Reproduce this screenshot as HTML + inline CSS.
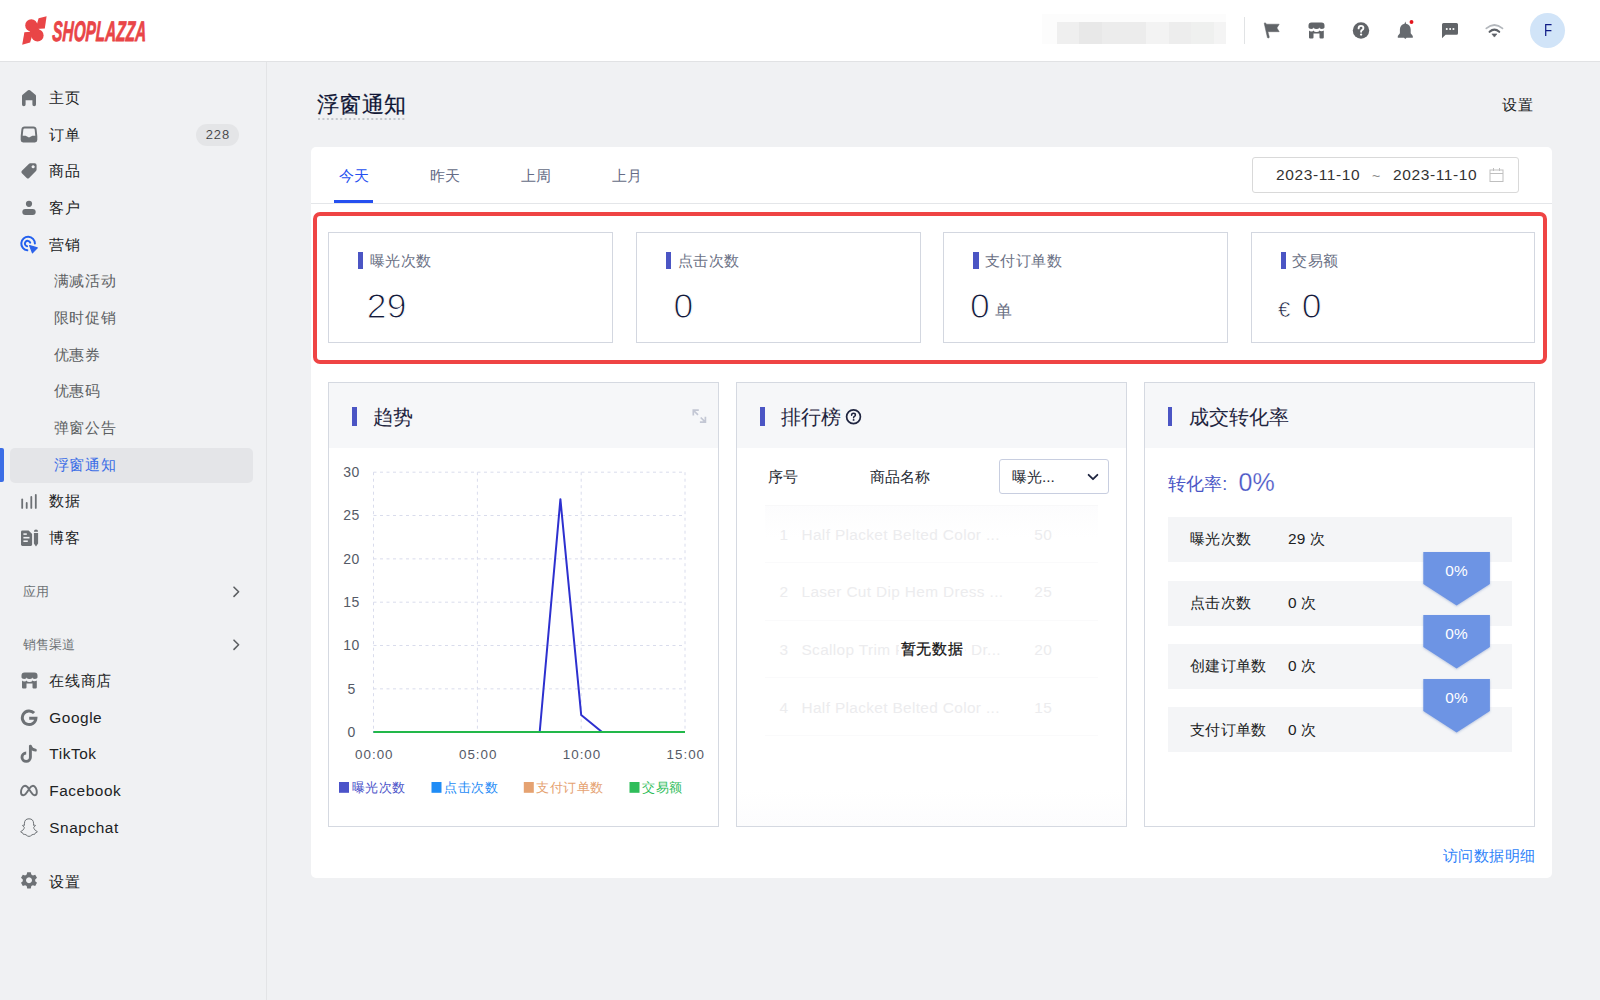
<!DOCTYPE html>
<html><head><meta charset="utf-8">
<style>
*{box-sizing:border-box;margin:0;padding:0}
html,body{width:1600px;height:1000px;overflow:hidden}
body{font-family:"Liberation Sans",sans-serif;background:#f0f1f3;color:#202223;position:relative}
.abs{position:absolute}
#hdr{left:0;top:0;width:1600px;height:62px;background:#fff;border-bottom:1px solid #e1e2e4}
#side{left:0;top:62px;width:267px;height:938px;background:#f0f1f3;border-right:1px solid #e3e4e6}
.nav{position:absolute;left:0;width:266px;height:20px;line-height:20px;font-size:15.4px;color:#202223;letter-spacing:0.7px}
.nav .t{position:absolute;left:49.3px;top:0;white-space:nowrap}
.nav.sub .t{left:53.5px;color:#5c5f62}
.nav .ic{position:absolute;left:20px;top:2px;width:17px;height:17px}
.sec{position:absolute;left:23px;font-size:13px;color:#6d7175;line-height:16px}
.chev{position:absolute;left:231px;width:8px;height:12px}
.tab{top:165.5px;font-size:15.4px;line-height:20px;color:#656c86;letter-spacing:0.2px}
.date{top:165.4px;font-size:15.5px;line-height:20px;color:#333;letter-spacing:0.6px}
.sbox{top:232.2px;width:284.5px;height:110.5px;border:1px solid #d3d7e0;background:#fff}
.sbox .bar{position:absolute;left:29px;top:18.8px;width:5.2px;height:17.4px;background:#4b55c4}
.sbox .lbl{position:absolute;left:40.5px;top:18px;font-size:15.4px;line-height:20px;color:#6b7185;white-space:nowrap;letter-spacing:0.5px}
.sbox .val{position:absolute;left:27.5px;top:52.4px;height:40px;white-space:nowrap;color:#141a3a}
.sbox .num{font-size:35.5px;line-height:40px;letter-spacing:0.2px;-webkit-text-stroke:1.1px #fff}
.sbox .unit{font-size:16.6px;color:#6b7185;margin-left:5px;position:relative;top:-1px}
.sbox .eur{font-size:22px;color:#141a3a;margin-right:10px;position:relative;left:-1.5px;top:-1px;-webkit-text-stroke:0.6px #fff}
.panel{top:382.3px;width:391px;height:444.5px;border:1px solid #d5d9e1;background:#fff}
.panel .ph{position:absolute;left:0;top:0;right:0;height:65px;background:#f6f7f9}
.panel .pbar{position:absolute;left:22.5px;top:23.6px;width:4.8px;height:19.5px;background:#4b55c4}
.panel .pt{position:absolute;left:44px;top:22px;font-size:20px;line-height:24px;color:#1f2540;white-space:nowrap}
.frow{left:737px;width:389px;height:20px;font-size:15.4px;line-height:20px;color:#ececee;white-space:nowrap;letter-spacing:0.35px}
</style></head>
<body>
<div id="hdr" class="abs">
<svg class="abs" style="left:18px;top:12px" width="34" height="36" viewBox="0 0 34 36"><g fill="#e94547">
<circle cx="13.3" cy="13.4" r="6.1"/><circle cx="19.5" cy="23.4" r="6.1"/><line x1="13.8" y1="14.4" x2="19" y2="22.4" stroke="#e94547" stroke-width="9"/>
<polygon points="20.6,6.3 28.6,4.2 26.8,16.6 17.5,16.9"/>
<polygon points="6.4,20.2 15.5,19.6 12.1,30.4 4.2,32.7"/></g></svg>
<div id="logotxt" class="abs" style="left:52px;top:13.8px;font-size:28.2px;font-weight:bold;font-style:italic;color:#e94547;transform-origin:0 27px;transform:scaleX(0.535) skewX(-5deg);line-height:34px;letter-spacing:0.4px;-webkit-text-stroke:0.9px #e94547">SHOPLAZZA</div>
<div class="abs" style="left:1042px;top:14px;width:184px;height:30px;background:#fcfcfc"></div>
<div class="abs" style="left:1057px;top:22px;width:22px;height:22px;background:#efefef"></div>
<div class="abs" style="left:1079px;top:22px;width:23px;height:22px;background:#e8e8e8"></div>
<div class="abs" style="left:1102px;top:22px;width:44px;height:22px;background:#ececec"></div>
<div class="abs" style="left:1146px;top:22px;width:23px;height:22px;background:#f3f3f3"></div>
<div class="abs" style="left:1169px;top:22px;width:22px;height:22px;background:#ededed"></div>
<div class="abs" style="left:1191px;top:22px;width:23px;height:22px;background:#eff0ef"></div>
<div class="abs" style="left:1214px;top:22px;width:12px;height:22px;background:#f4f4f4"></div>
<div class="abs" style="left:1244px;top:17px;width:1px;height:27px;background:#e1e3e5"></div>
<!-- flag -->
<svg class="abs" style="left:1262px;top:21px" width="20" height="20" viewBox="0 0 20 20"><path fill="#616468" stroke="#616468" stroke-width="0.5" stroke-linejoin="round" d="M2.2 2.3 Q2.6 1.6 3.5 1.9 L4.5 3.2 H17.2 L14.9 6.9 L17.2 10.7 H5.9 L7.3 16.1 Q7.3 17 6.3 17 Q5.6 17 5.4 16.5 Z"/></svg>
<!-- store -->
<svg class="abs" style="left:1306px;top:21px" width="20" height="20" viewBox="0 0 20 20"><path fill="#616468" d="M18.5 6.6 A2.67 1.5 0 0 1 13.17 6.6 A2.67 1.5 0 0 1 7.83 6.6 A2.67 1.5 0 0 1 2.5 6.6 V4.5 Q2.5 1.5 5.5 1.5 H15.5 Q18.5 1.5 18.5 4.5 Z M3 9.6 A2.67 1.5 0 0 0 7.83 9.6 A2.67 1.5 0 0 0 13.17 9.6 A2.67 1.5 0 0 0 17.8 9.6 V16.4 Q17.8 17.5 16.7 17.5 H14.6 Q13.5 17.5 13.5 16.4 V12.6 H7.5 V16.4 Q7.5 17.5 6.4 17.5 H4.1 Q3 17.5 3 16.4 Z"/></svg>
<!-- help -->
<svg class="abs" style="left:1351px;top:21px" width="20" height="20" viewBox="0 0 20 20"><circle cx="10" cy="9.5" r="8.2" fill="#616468"/><path d="M7.6 7.4 Q7.6 4.9 10 4.9 Q12.4 4.9 12.4 7.1 Q12.4 8.4 11 9.1 Q10.1 9.6 10.1 10.8" stroke="#fff" stroke-width="1.9" fill="none" stroke-linecap="round"/><circle cx="10.1" cy="13.6" r="1.15" fill="#fff"/></svg>
<!-- bell -->
<svg class="abs" style="left:1395px;top:19px" width="22" height="22" viewBox="0 0 22 22"><path fill="#666a6f" d="M10.3 2.4 L11.1 4.7 Q15.6 5.9 15.7 10.5 V14.2 L17.8 17 V18.7 H11.6 L10.3 20 L9 18.7 H2.8 V17 L4.9 14.2 V10.5 Q5 5.9 9.5 4.7 Z"/><circle cx="16.5" cy="3" r="1.95" fill="#e3141c"/></svg>
<!-- chat -->
<svg class="abs" style="left:1440px;top:20px" width="20" height="20" viewBox="0 0 20 20"><path fill="#616468" d="M3.5 3 H16.5 Q18 3 18 4.5 V13.3 Q18 14.8 16.5 14.8 H5.6 L2 18.2 V4.5 Q2 3 3.5 3 Z"/><rect x="5.9" y="8.1" width="1.7" height="1.8" fill="#fff"/><rect x="9.3" y="8.1" width="1.7" height="1.8" fill="#fff"/><rect x="12.6" y="8.1" width="1.7" height="1.8" fill="#fff"/></svg>
<!-- wifi -->
<svg class="abs" style="left:1484px;top:20px" width="21" height="20" viewBox="0 0 21 20"><path d="M2.3 8.4 Q10.4 1.6 18.5 8.4" stroke="#b3b7bc" stroke-width="1.7" fill="none" stroke-linecap="round"/><path d="M5.6 11.8 Q10.4 7.6 15.2 11.8" stroke="#5c6066" stroke-width="2.1" fill="none" stroke-linecap="round"/><path d="M7.9 13.9 H12.9 L10.4 17.1 Z" fill="#5c6066" stroke="#5c6066" stroke-width="0.6" stroke-linejoin="round"/></svg>
<div class="abs" style="left:1530.2px;top:12.6px;width:35.2px;height:35.2px;border-radius:50%;background:#d1e4f8"></div><div class="abs" style="left:1544.2px;top:21.3px;font-size:17px;line-height:20px;color:#0e1a85;transform:scaleX(0.78);transform-origin:0 0">F</div>
</div>
<div id="side" class="abs"></div>
<div class="abs" style="left:9.5px;top:447.6px;width:243px;height:35px;background:#e4e5e8;border-radius:5px"></div>
<div class="abs" style="left:0;top:448px;width:3.5px;height:34px;background:#3c6ee6;border-radius:0 2px 2px 0"></div>
<div class="nav" style="top:88.0px"><span class="t">主页</span></div>
<div class="nav" style="top:124.7px"><span class="t">订单</span></div>
<div class="nav" style="top:161.3px"><span class="t">商品</span></div>
<div class="nav" style="top:198.0px"><span class="t">客户</span></div>
<div class="nav" style="top:234.6px"><span class="t">营销</span></div>
<div class="nav sub" style="top:271.3px"><span class="t">满减活动</span></div>
<div class="nav sub" style="top:308.0px"><span class="t">限时促销</span></div>
<div class="nav sub" style="top:344.6px"><span class="t">优惠券</span></div>
<div class="nav sub" style="top:381.3px"><span class="t">优惠码</span></div>
<div class="nav sub" style="top:418.0px"><span class="t">弹窗公告</span></div>
<div class="nav sub" style="top:454.6px"><span class="t" style="color:#3c6ee6">浮窗通知</span></div>
<div class="nav" style="top:491.3px"><span class="t">数据</span></div>
<div class="nav" style="top:528.0px"><span class="t">博客</span></div>
<div class="abs" style="left:196px;top:123.5px;width:43px;height:22px;border-radius:11px;background:#e4e5e7;font-size:13px;line-height:22px;text-align:center;color:#202223;letter-spacing:1px;padding-left:1px;-webkit-text-stroke:0.2px #e4e5e7">228</div>
<div class="sec" style="top:584px">应用</div>
<div class="sec" style="top:637px">销售渠道</div>
<svg class="abs" style="left:232px;top:585.5px" width="9" height="12" viewBox="0 0 9 12"><path d="M2 1.2 L6.6 5.8 L2 10.4" stroke="#5c5f62" stroke-width="1.6" fill="none" stroke-linecap="round" stroke-linejoin="round"/></svg>
<svg class="abs" style="left:232px;top:639px" width="9" height="12" viewBox="0 0 9 12"><path d="M2 1.2 L6.6 5.8 L2 10.4" stroke="#5c5f62" stroke-width="1.6" fill="none" stroke-linecap="round" stroke-linejoin="round"/></svg>
<div class="nav" style="top:671.0px"><span class="t">在线商店</span></div>
<div class="nav" style="top:707.6px"><span class="t" style="letter-spacing:0.55px">Google</span></div>
<div class="nav" style="top:744.3px"><span class="t" style="letter-spacing:0.55px">TikTok</span></div>
<div class="nav" style="top:781.0px"><span class="t" style="letter-spacing:0.55px">Facebook</span></div>
<div class="nav" style="top:817.6px"><span class="t" style="letter-spacing:0.55px">Snapchat</span></div>
<div class="nav" style="top:871.7px"><span class="t">设置</span></div>

<svg class="abs" style="left:20px;top:88px" width="18" height="20" viewBox="0 0 18 20"><path fill="#6d7175" d="M9 1.9 Q9.5 1.9 10 2.3 L15.4 6.8 Q16 7.3 16 8.1 V16.4 Q16 18.2 14.2 18.2 Q12.4 18.2 12.4 16.4 V12.2 H5.6 V16.4 Q5.6 18.2 3.8 18.2 Q2 18.2 2 16.4 V8.1 Q2 7.3 2.6 6.8 L8 2.3 Q8.5 1.9 9 1.9 Z"/></svg>
<svg class="abs" style="left:20px;top:125px" width="18" height="19" viewBox="0 0 18 19"><path fill="#6d7175" fill-rule="evenodd" d="M4.5 1.6 H13.5 Q16.2 1.6 16.6 4.4 L17.3 11 V15 Q17.3 17.4 14.9 17.4 H3.1 Q0.7 17.4 0.7 15 V11 L1.4 4.4 Q1.8 1.6 4.5 1.6 Z M4.6 3.5 Q3.4 3.5 3.3 4.7 L2.7 10.8 H5.6 L9 12.6 L12.4 10.8 H15.3 L14.7 4.7 Q14.6 3.5 13.4 3.5 Z"/></svg>
<svg class="abs" style="left:20px;top:162px" width="18" height="18" viewBox="0 0 18 18"><path fill="#6d7175" fill-rule="evenodd" d="M10.2 1.2 H14.6 Q16.6 1.2 16.6 3.2 V7.6 Q16.6 8.5 16 9.1 L9.1 16 Q7.9 17.2 6.7 16 L1.9 11.2 Q0.7 10 1.9 8.8 L8.8 1.9 Q9.4 1.2 10.2 1.2 Z M13.1 3.4 A1.45 1.45 0 1 0 13.11 3.4 Z"/><circle cx="13.1" cy="4.85" r="1.4" fill="#f0f1f3"/></svg>
<svg class="abs" style="left:20px;top:198px" width="18" height="20" viewBox="0 0 18 20"><circle cx="9" cy="5.8" r="3.1" fill="#6d7175"/><rect x="2.3" y="11" width="13.4" height="6" rx="3" fill="#6d7175"/></svg>
<svg class="abs" style="left:19px;top:235px" width="20" height="20" viewBox="0 0 20 20"><path d="M15.9 8.6 A6.8 6.8 0 1 0 8.3 15.3" stroke="#2360ee" stroke-width="2" fill="none" stroke-linecap="round"/><path d="M11.2 7.6 A2.75 2.75 0 1 0 8.1 11.3" stroke="#2360ee" stroke-width="2" fill="none" stroke-linecap="round"/><path d="M10.6 10.6 L18.3 12.9 L13.4 17.8 Z" fill="#2b62ea" stroke="#2b62ea" stroke-width="1.1" stroke-linejoin="round"/></svg>
<svg class="abs" style="left:20px;top:492px" width="18" height="18" viewBox="0 0 18 18"><g stroke="#6d7175" stroke-width="1.8" stroke-linecap="round"><line x1="2.2" y1="7.5" x2="2.2" y2="15.9"/><line x1="6.7" y1="10.9" x2="6.7" y2="15.9"/><line x1="11.3" y1="5" x2="11.3" y2="15.9"/><line x1="15.8" y1="2.9" x2="15.8" y2="15.9"/></g></svg>
<svg class="abs" style="left:20px;top:528px" width="20" height="20" viewBox="0 0 20 20"><path fill="#6d7175" d="M2.4 2.5 H8.6 L12.1 6 V16.6 Q12.1 17.9 10.8 17.9 H2.4 Q1 17.9 1 16.6 V3.9 Q1 2.5 2.4 2.5 Z"/><g fill="#f0f1f3"><rect x="3.4" y="5.3" width="3.4" height="1.6"/><rect x="3.4" y="8.9" width="6.1" height="1.6"/><rect x="3.4" y="12.4" width="4.4" height="1.6"/></g><path fill="#6d7175" d="M13.9 3.8 Q13.9 1.4 16 1.4 Q18.1 1.4 18.1 3.8 Z M13.9 5 H18.1 V15.6 L16 18.6 L13.9 15.6 Z"/></svg>
<svg class="abs" style="left:19px;top:670.5px" width="20" height="20" viewBox="0 0 20 20"><path fill="#6d7175" d="M18.5 6.6 A2.67 1.5 0 0 1 13.17 6.6 A2.67 1.5 0 0 1 7.83 6.6 A2.67 1.5 0 0 1 2.5 6.6 V4.5 Q2.5 1.5 5.5 1.5 H15.5 Q18.5 1.5 18.5 4.5 Z M3 9.6 A2.67 1.5 0 0 0 7.83 9.6 A2.67 1.5 0 0 0 13.17 9.6 A2.67 1.5 0 0 0 17.8 9.6 V16.4 Q17.8 17.5 16.7 17.5 H14.6 Q13.5 17.5 13.5 16.4 V12.6 H7.5 V16.4 Q7.5 17.5 6.4 17.5 H4.1 Q3 17.5 3 16.4 Z"/></svg>
<svg class="abs" style="left:20px;top:708.8px" width="18" height="19" viewBox="0 0 18 19"><path d="M14.1 4.1 A6.8 6.8 0 1 0 15.9 9.3 H9.2" stroke="#6d7175" stroke-width="3" fill="none"/></svg>
<svg class="abs" style="left:20px;top:744px" width="18" height="20" viewBox="0 0 18 20"><path d="M10.4 1.8 V13.2 A4.2 4.2 0 1 1 6.2 9" stroke="#6d7175" stroke-width="2.9" fill="none"/><path d="M10.4 2.2 Q11.2 5.5 15.4 6.2" stroke="#6d7175" stroke-width="2.8" fill="none" stroke-linecap="round"/></svg>
<svg class="abs" style="left:19px;top:782px" width="20" height="16" viewBox="0 0 20 16"><path d="M10 7 C8.5 4.6 7.3 3.8 6 3.8 C3.6 3.8 2 7.2 2 10.2 C2 12.3 3 13.3 4.3 13.3 C6.3 13.3 7.8 11 10 7 C12 3.9 13 3.8 14 3.8 C16.3 3.8 17.8 7.5 17.8 10.2 C17.8 12.3 16.8 13.3 15.6 13.3 C14 13.3 12.6 11.5 10 7 Z" stroke="#6d7175" stroke-width="1.9" fill="none" stroke-linejoin="round"/></svg>
<svg class="abs" style="left:19px;top:817px" width="20" height="21" viewBox="0 0 20 21"><path d="M10 1.8 Q14.6 1.8 14.6 6.8 V8.4 Q15.6 8 16.4 8.4 Q16.6 9 15.2 9.7 Q14.4 10 14.9 11.4 Q16 13.8 18.3 14.6 Q18.3 15.5 16.3 15.9 Q15.9 17 15.5 17.4 Q14.2 17.2 13 17.8 Q11.4 19.4 10 19.4 Q8.6 19.4 7 17.8 Q5.8 17.2 4.5 17.4 Q4.1 17 3.7 15.9 Q1.7 15.5 1.7 14.6 Q4 13.8 5.1 11.4 Q5.6 10 4.8 9.7 Q3.4 9 3.6 8.4 Q4.4 8 5.4 8.4 V6.8 Q5.4 1.8 10 1.8 Z" stroke="#6d7175" stroke-width="1" fill="none" stroke-linejoin="round"/></svg>
<svg class="abs" style="left:19px;top:871px" width="20" height="20" viewBox="0 0 20 20"><path fill="#6d7175" fill-rule="evenodd" d="M8.2 1.2 H11.8 L12.3 3.5 L13.9 4.4 L16.2 3.7 L18 6.8 L16.2 8.4 V10.2 L18 11.8 L16.2 15 L13.9 14.2 L12.3 15.1 L11.8 17.5 H8.2 L7.7 15.1 L6.1 14.2 L3.8 15 L2 11.8 L3.8 10.2 V8.4 L2 6.8 L3.8 3.7 L6.1 4.4 L7.7 3.5 Z M10 6.3 A3 3 0 1 0 10.01 6.3 Z"/></svg>

<!-- MAIN -->
<div class="abs" style="left:317px;top:92px;font-size:22px;line-height:26px;color:#0f1535;letter-spacing:0.3px;-webkit-text-stroke:0.2px #0f1535">浮窗通知</div>
<svg class="abs" style="left:318px;top:118px" width="88" height="2" viewBox="0 0 88 2"><g fill="#c4c8cd"><rect x="0.00" y="0" width="2" height="2"/><rect x="4.44" y="0" width="2" height="2"/><rect x="8.88" y="0" width="2" height="2"/><rect x="13.32" y="0" width="2" height="2"/><rect x="17.76" y="0" width="2" height="2"/><rect x="22.20" y="0" width="2" height="2"/><rect x="26.64" y="0" width="2" height="2"/><rect x="31.08" y="0" width="2" height="2"/><rect x="35.52" y="0" width="2" height="2"/><rect x="39.96" y="0" width="2" height="2"/><rect x="44.40" y="0" width="2" height="2"/><rect x="48.84" y="0" width="2" height="2"/><rect x="53.28" y="0" width="2" height="2"/><rect x="57.72" y="0" width="2" height="2"/><rect x="62.16" y="0" width="2" height="2"/><rect x="66.60" y="0" width="2" height="2"/><rect x="71.04" y="0" width="2" height="2"/><rect x="75.48" y="0" width="2" height="2"/><rect x="79.92" y="0" width="2" height="2"/><rect x="84.36" y="0" width="2" height="2"/></g></svg>
<div class="abs" style="left:1502.3px;top:94.6px;font-size:15.4px;line-height:20px;color:#202223;letter-spacing:1px">设置</div>
<div id="card" class="abs" style="left:311px;top:147px;width:1241px;height:731px;background:#fff;border-radius:5px"></div>
<div class="abs" style="left:311px;top:203px;width:1241px;height:1px;background:#e4e6e9"></div>
<div class="abs tab" style="left:338.5px;color:#2550f0">今天</div>
<div class="abs tab" style="left:430px">昨天</div>
<div class="abs tab" style="left:521px">上周</div>
<div class="abs tab" style="left:612px">上月</div>
<div class="abs" style="left:333.8px;top:200px;width:39.5px;height:3px;background:#2550f0"></div>
<div class="abs" style="left:1252px;top:157px;width:267px;height:36px;border:1px solid #d9d9d9;border-radius:3px"></div>
<div class="abs date" style="left:1276px">2023-11-10</div>
<div class="abs" style="left:1372px;top:166px;font-size:14px;line-height:20px;color:#8a8a8a">~</div>
<div class="abs date" style="left:1393px">2023-11-10</div>
<svg class="abs" style="left:1489px;top:167px" width="15" height="16" viewBox="0 0 15 16"><g fill="none" stroke="#bfbfbf" stroke-width="1"><rect x="1" y="3" width="13" height="11.5"/><line x1="1" y1="6.5" x2="14" y2="6.5"/><line x1="4.5" y1="1" x2="4.5" y2="4"/><line x1="10.5" y1="1" x2="10.5" y2="4"/></g></svg>
<div class="abs" style="left:312.8px;top:212.2px;width:1234.7px;height:152.3px;border:4.2px solid #ef4444;border-radius:7px"></div>
<div class="abs sbox" style="left:328.3px"><div class="bar"></div><div class="lbl">曝光次数</div><div class="val"><span class="num" style="margin-left:10px">29</span></div></div>
<div class="abs sbox" style="left:636px"><div class="bar"></div><div class="lbl">点击次数</div><div class="val"><span class="num" style="margin-left:9px">0</span></div></div>
<div class="abs sbox" style="left:943.4px"><div class="bar"></div><div class="lbl">支付订单数</div><div class="val"><span class="num" style="margin-left:-2px">0</span><span class="unit">单</span></div></div>
<div class="abs sbox" style="left:1250.9px"><div class="bar"></div><div class="lbl">交易额</div><div class="val"><span class="eur">€</span><span class="num">0</span></div></div>
<div class="abs panel" style="left:328.3px"><div class="ph"></div><div class="pbar"></div><div class="pt">趋势</div></div>
<div class="abs panel" style="left:736.3px"><div class="ph"></div><div class="pbar"></div><div class="pt">排行榜</div></div>
<div class="abs panel" style="left:1144.3px"><div class="ph"></div><div class="pbar" style="width:4.2px"></div><div class="pt">成交转化率</div></div>
<svg class="abs" style="left:0;top:0" width="1600" height="1000" viewBox="0 0 1600 1000">
<g stroke="#c3c7d4" stroke-width="1.7" fill="none" stroke-linecap="butt"><path d="M693.3 415.6 V410.2 H698.8 M693.6 410.5 L698 414.9"/><path d="M705.4 416.8 V422.2 H699.9 M705.1 421.9 L700.7 417.5"/></g>
<path d="M373.5 472.20 H685 M373.5 515.53 H685 M373.5 558.86 H685 M373.5 602.19 H685 M373.5 645.52 H685 M373.5 688.85 H685 M373.5 472.2 V732.2 M477.4 472.2 V732.2 M581.2 472.2 V732.2 M685 472.2 V732.2" stroke="#d9dcec" stroke-width="1" stroke-dasharray="3 3.5" fill="none"/>
<polyline points="373.5,732 539.7,732 560.4,499.2 581.2,715 602,732 685,732" stroke="#2d30cf" stroke-width="2" fill="none" stroke-linejoin="round"/>
<line x1="373.5" y1="732" x2="685" y2="732" stroke="#22b84a" stroke-width="2"/>
<text x="351.5" y="477.0" text-anchor="middle" font-size="14" fill="#555a66" letter-spacing="0.4">30</text>
<text x="351.5" y="520.3" text-anchor="middle" font-size="14" fill="#555a66" letter-spacing="0.4">25</text>
<text x="351.5" y="563.7" text-anchor="middle" font-size="14" fill="#555a66" letter-spacing="0.4">20</text>
<text x="351.5" y="607.0" text-anchor="middle" font-size="14" fill="#555a66" letter-spacing="0.4">15</text>
<text x="351.5" y="650.3" text-anchor="middle" font-size="14" fill="#555a66" letter-spacing="0.4">10</text>
<text x="351.5" y="693.6" text-anchor="middle" font-size="14" fill="#555a66" letter-spacing="0.4">5</text>
<text x="351.5" y="737.0" text-anchor="middle" font-size="14" fill="#555a66" letter-spacing="0.4">0</text>
<text x="373.8" dx="0.5" y="758.8" text-anchor="middle" font-size="13.4" fill="#555a66" letter-spacing="1">00:00</text>
<text x="477.7" dx="0.5" y="758.8" text-anchor="middle" font-size="13.4" fill="#555a66" letter-spacing="1">05:00</text>
<text x="581.5" dx="0.5" y="758.8" text-anchor="middle" font-size="13.4" fill="#555a66" letter-spacing="1">10:00</text>
<text x="685.3" dx="0.5" y="758.8" text-anchor="middle" font-size="13.4" fill="#555a66" letter-spacing="1">15:00</text>
<rect x="339" y="782" width="10" height="10.8" fill="#4b53c9"/><text x="351.5" y="792" font-size="13.2" letter-spacing="0.5" fill="#4b53c9">曝光次数</text>
<rect x="431.5" y="782" width="10" height="10.8" fill="#1f8cf6"/><text x="444.0" y="792" font-size="13.2" letter-spacing="0.5" fill="#1f8cf6">点击次数</text>
<rect x="523.8" y="782" width="10" height="10.8" fill="#e5a271"/><text x="536.3" y="792" font-size="13.2" letter-spacing="0.5" fill="#e5a271">支付订单数</text>
<rect x="629.5" y="782" width="10" height="10.8" fill="#2fbd5a"/><text x="642.0" y="792" font-size="13.2" letter-spacing="0.5" fill="#2fbd5a">交易额</text>
</svg>
<svg class="abs" style="left:845px;top:407.5px" width="17" height="17" viewBox="0 0 17 17"><circle cx="8.5" cy="8.7" r="6.9" stroke="#1f2540" stroke-width="1.7" fill="none"/><path d="M6.6 7.2 Q6.6 5.3 8.5 5.3 Q10.4 5.3 10.4 6.9 Q10.4 7.9 9.4 8.4 Q8.6 8.8 8.6 9.8" stroke="#1f2540" stroke-width="1.5" fill="none" stroke-linecap="round"/><circle cx="8.6" cy="11.9" r="0.95" fill="#1f2540"/></svg>
<div class="abs" style="left:768px;top:467px;font-size:15.4px;line-height:20px;color:#262a33">序号</div>
<div class="abs" style="left:869.5px;top:467px;font-size:15.4px;line-height:20px;color:#262a33">商品名称</div>
<div class="abs" style="left:998.5px;top:459.2px;width:110.7px;height:34.8px;border:1px solid #c8cee0;border-radius:3px;background:#fff"></div>
<div class="abs" style="left:1012px;top:467px;font-size:15.4px;line-height:20px;color:#262a33">曝光...</div>
<svg class="abs" style="left:1086px;top:472px" width="14" height="10" viewBox="0 0 14 10"><path d="M2.6 2.8 L7 7.2 L11.4 2.8" stroke="#1f2540" stroke-width="1.8" fill="none" stroke-linecap="round" stroke-linejoin="round"/></svg>
<div class="abs" style="left:765px;top:505px;width:333px;height:32px;background:linear-gradient(#fcfcfd,#fff)"></div><div class="abs" style="left:765px;top:504.5px;width:333px;height:1px;background:#f8f8f9"></div>
<div class="abs frow" style="top:524.8px"><span style="position:absolute;left:42.5px">1</span><span style="position:absolute;left:64.5px">Half Placket Belted Color ...</span><span style="position:absolute;left:297.29999999999995px">50</span></div>
<div class="abs" style="left:765px;top:561.9px;width:333px;height:1px;background:#fafafb"></div>
<div class="abs frow" style="top:582.4px"><span style="position:absolute;left:42.5px">2</span><span style="position:absolute;left:64.5px">Laser Cut Dip Hem Dress ...</span><span style="position:absolute;left:297.29999999999995px">25</span></div>
<div class="abs" style="left:765px;top:619.5px;width:333px;height:1px;background:#fafafb"></div>
<div class="abs frow" style="top:640.0px"><span style="position:absolute;left:42.5px">3</span><span style="position:absolute;left:64.5px">Scallop Trim Flounce</span><span style="position:absolute;left:180px;width:84px;text-align:right">e Dr...</span><span style="position:absolute;left:297.29999999999995px">20</span></div>
<div class="abs" style="left:765px;top:677.1px;width:333px;height:1px;background:#fafafb"></div>
<div class="abs frow" style="top:697.6px"><span style="position:absolute;left:42.5px">4</span><span style="position:absolute;left:64.5px">Half Placket Belted Color ...</span><span style="position:absolute;left:297.29999999999995px">15</span></div>
<div class="abs" style="left:765px;top:734.7px;width:333px;height:1px;background:#fafafb"></div>
<div class="abs" style="left:737.3px;top:790px;width:389px;height:35.8px;background:linear-gradient(#fff,#fcfcfd)"></div>
<div class="abs" style="left:899px;top:639px;width:66px;text-align:left;padding-left:1.5px;font-size:15.4px;line-height:20px;color:#111;-webkit-text-stroke:0.25px #111;background:#fff;letter-spacing:0.9px">暂无数据</div>
<div class="abs" style="left:1168.2px;top:471.5px;font-size:18px;line-height:24px;color:#4a56c6;white-space:nowrap;letter-spacing:0px">转化率:</div>
<div class="abs" style="left:1238.5px;top:466.6px;font-size:25px;line-height:30px;color:#4a56c6;-webkit-text-stroke:0.25px #fff">0%</div>
<div class="abs" style="left:1167.8px;top:516.9px;width:344px;height:45.3px;background:#f4f5f7"></div>
<div class="abs" style="left:1190px;top:529.4px;font-size:15.4px;line-height:20px;color:#202223;white-space:nowrap;letter-spacing:0.25px">曝光次数</div>
<div class="abs" style="left:1288px;top:529.4px;font-size:15.4px;line-height:20px;color:#202223;white-space:nowrap;letter-spacing:0.3px">29 次</div>
<div class="abs" style="left:1167.8px;top:580.6px;width:344px;height:45.3px;background:#f4f5f7"></div>
<div class="abs" style="left:1190px;top:593.1px;font-size:15.4px;line-height:20px;color:#202223;white-space:nowrap;letter-spacing:0.25px">点击次数</div>
<div class="abs" style="left:1288px;top:593.1px;font-size:15.4px;line-height:20px;color:#202223;white-space:nowrap;letter-spacing:0.3px">0 次</div>
<div class="abs" style="left:1167.8px;top:643.8px;width:344px;height:45.3px;background:#f4f5f7"></div>
<div class="abs" style="left:1190px;top:656.3px;font-size:15.4px;line-height:20px;color:#202223;white-space:nowrap;letter-spacing:0.25px">创建订单数</div>
<div class="abs" style="left:1288px;top:656.3px;font-size:15.4px;line-height:20px;color:#202223;white-space:nowrap;letter-spacing:0.3px">0 次</div>
<div class="abs" style="left:1167.8px;top:707.2px;width:344px;height:45.3px;background:#f4f5f7"></div>
<div class="abs" style="left:1190px;top:719.7px;font-size:15.4px;line-height:20px;color:#202223;white-space:nowrap;letter-spacing:0.25px">支付订单数</div>
<div class="abs" style="left:1288px;top:719.7px;font-size:15.4px;line-height:20px;color:#202223;white-space:nowrap;letter-spacing:0.3px">0 次</div>
<svg class="abs" style="left:1421px;top:551px" width="71" height="58" viewBox="0 0 71 58"><defs><filter id="sh" x="-20%" y="-20%" width="140%" height="140%"><feDropShadow dx="0" dy="1" stdDeviation="0.8" flood-color="#5070b0" flood-opacity="0.35"/></filter></defs><path d="M2.3 1 H68.9 V33 L35.6 54.5 L2.3 33 Z" fill="#6d94e4" filter="url(#sh)"/><text x="35.6" y="25" text-anchor="middle" font-size="15.4" fill="#fff" letter-spacing="0.3">0%</text></svg>
<svg class="abs" style="left:1421px;top:613.9px" width="71" height="58" viewBox="0 0 71 58"><defs><filter id="sh" x="-20%" y="-20%" width="140%" height="140%"><feDropShadow dx="0" dy="1" stdDeviation="0.8" flood-color="#5070b0" flood-opacity="0.35"/></filter></defs><path d="M2.3 1 H68.9 V33 L35.6 54.5 L2.3 33 Z" fill="#6d94e4" filter="url(#sh)"/><text x="35.6" y="25" text-anchor="middle" font-size="15.4" fill="#fff" letter-spacing="0.3">0%</text></svg>
<svg class="abs" style="left:1421px;top:677.6px" width="71" height="58" viewBox="0 0 71 58"><defs><filter id="sh" x="-20%" y="-20%" width="140%" height="140%"><feDropShadow dx="0" dy="1" stdDeviation="0.8" flood-color="#5070b0" flood-opacity="0.35"/></filter></defs><path d="M2.3 1 H68.9 V33 L35.6 54.5 L2.3 33 Z" fill="#6d94e4" filter="url(#sh)"/><text x="35.6" y="25" text-anchor="middle" font-size="15.4" fill="#fff" letter-spacing="0.3">0%</text></svg>
<div class="abs" style="left:1442.5px;top:846px;font-size:15.4px;line-height:20px;color:#2d7ff9;white-space:nowrap;letter-spacing:0.6px">访问数据明细</div>
</body></html>
